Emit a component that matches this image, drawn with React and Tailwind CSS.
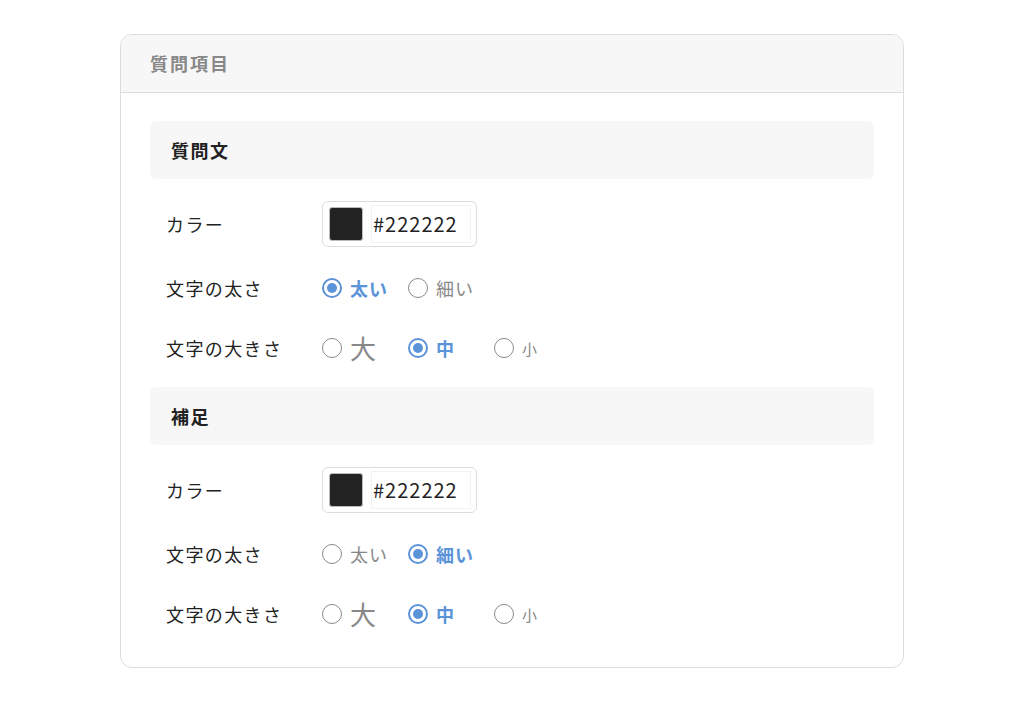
import React from "react";

const FONT = { fontFamily: '"Noto Sans CJK JP", "Noto Sans", sans-serif' };

function Radio({ checked }) {
  return checked ? (
    <span className="flex h-[20px] w-[20px] shrink-0 items-center justify-center rounded-full border-2 border-[#5b93d9] bg-white">
      <span className="h-[10px] w-[10px] rounded-full bg-[#5b93d9]" />
    </span>
  ) : (
    <span className="h-[20px] w-[20px] shrink-0 rounded-full border-[1.5px] border-[#8a8a8a] bg-white" />
  );
}

function Option({ checked, children, size }) {
  const textCls = checked
    ? "font-bold text-[#5b93d9] text-[18px]"
    : size === "lg"
    ? "text-[#888] text-[26px]"
    : size === "sm"
    ? "text-[#888] text-[15px]"
    : "text-[#888] text-[18px]";
  return (
    <label className="flex w-[86px] items-center gap-[8px]">
      <Radio checked={checked} />
      <span className={`leading-none tracking-[1px] ${textCls}`}>{children}</span>
    </label>
  );
}

function Row({ label, children, className }) {
  return (
    <div className={`flex items-center pl-[16px] ${className}`}>
      <div className="w-[156px] text-[18px] leading-none tracking-[1.4px] text-[#222]">{label}</div>
      {children}
    </div>
  );
}

function ColorField() {
  return (
    <div className="flex h-[46px] w-[155px] items-center rounded-[6px] border border-[#ddd] bg-white pl-[6px] pr-[5px]">
      <div className="h-[34px] w-[34px] rounded-[3px] border border-[#bbb] bg-[#222]" />
      <div className="ml-[8px] flex h-[38px] flex-1 items-center border border-[#f2f2f2] pl-[1px] text-[20px] tracking-[1px] text-[#222]">
        #222222
      </div>
    </div>
  );
}

function Section({ title, weight, first }) {
  return (
    <div className={first ? "" : "mt-[27px]"}>
      <div className="flex h-[58px] items-center rounded-[6px] bg-[#f7f7f7] px-[21px] text-[18px] font-bold tracking-[1.5px] text-[#222]">
        {title}
      </div>
      <Row label="カラー" className="mt-[22px] h-[46px]">
        <ColorField />
      </Row>
      <Row label="文字の太さ" className="mt-[29px] h-[24px]">
        <Option checked={weight === "bold"}>太い</Option>
        <Option checked={weight === "thin"}>細い</Option>
      </Row>
      <Row label="文字の大きさ" className="mt-[36px] h-[24px]">
        <Option size="lg">大</Option>
        <Option checked>中</Option>
        <Option size="sm">小</Option>
      </Row>
    </div>
  );
}

export default function App() {
  return (
    <div className="min-h-[709px] bg-white pt-[34px]" style={FONT}>
      <div className="mx-auto w-[784px] overflow-hidden rounded-[12px] border border-[#ddd] bg-white">
        <div className="flex h-[58px] items-center border-b border-[#ddd] bg-[#f7f7f7] px-[29px] text-[18px] font-bold tracking-[2px] text-[#888]">
          質問項目
        </div>
        <div className="px-[29px] pb-[41px] pt-[28px]">
          <Section title="質問文" weight="bold" first />
          <Section title="補足" weight="thin" />
        </div>
      </div>
    </div>
  );
}
